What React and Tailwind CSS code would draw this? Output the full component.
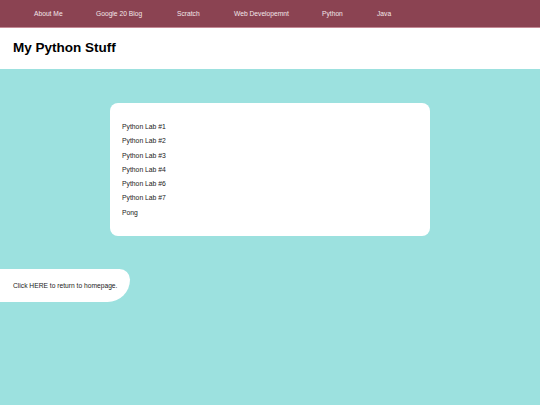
export default function App() {
  const navItems = [
    { label: 'About Me', w: 'w-[62px]' },
    { label: 'Google 20 Blog', w: 'w-[81px]' },
    { label: 'Scratch', w: 'w-[57px]' },
    { label: 'Web Developemnt', w: 'w-[88px]' },
    { label: 'Python', w: 'w-[55px]' },
    { label: 'Java', w: 'w-[40px]' },
  ];
  const labs = ['Python Lab #1', 'Python Lab #2', 'Python Lab #3', 'Python Lab #4', 'Python Lab #6', 'Python Lab #7', 'Pong'];

  return (
    <div className="min-h-[405px] w-[540px] bg-[#9ce1df] font-['Liberation_Sans',Arial,sans-serif]">
      <nav className="flex h-[28px] items-center bg-[#8b4352] pl-[34px] pt-[2px] border-b border-[#c58a96]">
        {navItems.map((item) => (
          <span key={item.label} className={`${item.w} shrink-0 whitespace-nowrap text-[6.7px] text-[#f3e6e9]`}>
            {item.label}
          </span>
        ))}
      </nav>
      <header className="flex h-[41px] items-center bg-white px-[13px]">
        <h1 className="text-[13.5px] font-bold text-black">My Python Stuff</h1>
      </header>
      <div className="pt-[34px]">
        <div className="mx-[110px] h-[133px] rounded-[8px] bg-white pl-[12px] pt-[17px]">
          {labs.map((lab) => (
            <div key={lab} className="h-[14.3px] text-[6.8px] leading-[14.3px] text-[#1a1a1a]">
              {lab}
            </div>
          ))}
        </div>
      </div>
      <div className="mt-[33px] flex h-[33px] w-[130px] items-center rounded-tr-[16px] rounded-br-[34px] bg-white pl-[13px] pt-[2px]">
        <span className="whitespace-nowrap text-[6.7px] text-[#1a1a1a]">Click HERE to return to homepage.</span>
      </div>
    </div>
  );
}
